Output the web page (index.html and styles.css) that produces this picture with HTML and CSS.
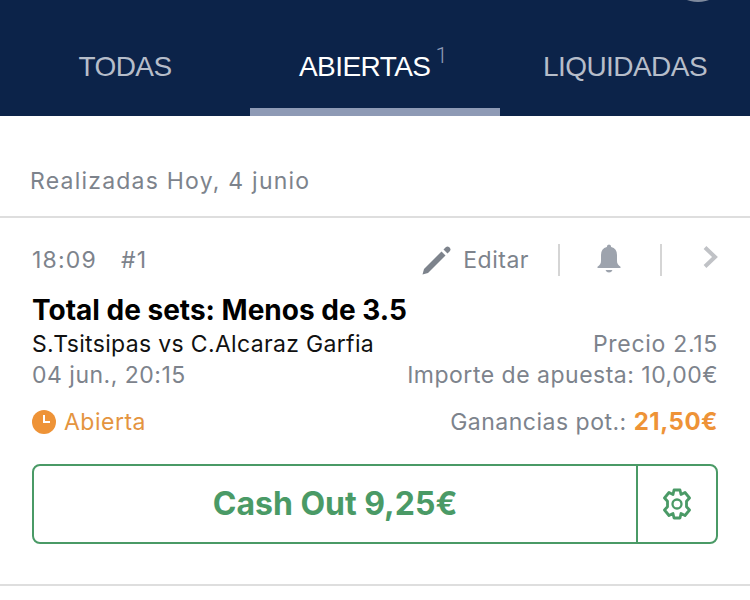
FILE: index.html
```html
<!DOCTYPE html>
<html lang="en">
<head>
    <meta charset="UTF-8">
    <meta name="viewport" content="width=device-width, initial-scale=1.0">
    <title>Apuestas</title>
    <link rel="stylesheet" href="styles.css">
</head>
<body>
    <header class="header">
        <div class="avatar"></div>
        <nav class="tabs">
            <div class="tab">TODAS</div>
            <div class="tab active">ABIERTAS<sup class="count">1</sup></div>
            <div class="tab">LIQUIDADAS</div>
        </nav>
    </header>
    <div class="date-row">Realizadas Hoy, 4 junio</div>
    <section class="bet">
        <div class="bet-top">
            <div class="time"><span>18:09</span><span>#1</span></div>
            <div class="actions">
                <svg class="pencil" width="30" height="30" viewBox="0 0 30 30">
                    <path d="M0.500 29.500 L2 24 L19.500 6.500 L23.500 10.500 L6 28 Z" fill="#7d838c"/>
                    <path d="M21.500 4.500 L24 2 Q25.500 0.800 27 2 L28 3 Q29.200 4.500 28 6 L25.500 8.500 Z" fill="#7d838c"/>
                </svg>
                <span class="edit">Editar</span>
                <i class="sep first"></i>
                <svg class="bell" width="26" height="30" viewBox="0 0 26 30">
                    <path d="M13 0.500 Q15.200 0.500 15.200 3 Q21 4.500 21 11 L21 17 Q21 20.500 24.500 22.800 L24.500 24 L1.500 24 L1.500 22.800 Q5 20.500 5 17 L5 11 Q5 4.500 10.800 3 Q10.800 0.500 13 0.500 Z" fill="#9da3ad"/>
                    <path d="M9.500 26 L16.500 26 Q15.500 28.500 13 28.500 Q10.500 28.500 9.500 26 Z" fill="#9da3ad"/>
                </svg>
                <i class="sep"></i>
                <svg class="chevron" width="16" height="24" viewBox="0 0 16 24">
                    <path d="M3 2.500 L13 12 L3 21.500" fill="none" stroke="#c0c2c6" stroke-width="4"/>
                </svg>
            </div>
        </div>
        <h2 class="market">Total de sets: Menos de 3.5</h2>
        <div class="line first-line">
            <span class="match">S.Tsitsipas vs C.Alcaraz Garfia</span>
            <span class="muted price">Precio 2.15</span>
        </div>
        <div class="line tight">
            <span class="muted">04 jun., 20:15</span>
            <span class="muted">Importe de apuesta: 10,00€</span>
        </div>
        <div class="line status-row">
            <span class="status">
                <svg width="24" height="24" viewBox="0 0 24 24">
                    <circle cx="12" cy="12" r="12" fill="#ee9337"/>
                    <path d="M12 5 L12 12 L18 12" fill="none" stroke="#fff" stroke-width="2"/>
                </svg>
                Abierta
            </span>
            <span class="muted">Ganancias pot.: <b class="win">21,50€</b></span>
        </div>
        <div class="cashout">
            <div class="cash-label">Cash Out 9,25€</div>
            <div class="cash-gear">
                <svg width="32" height="32" viewBox="0 0 32 32">
                    <path d="M13 2 L19 2 L20 6.500 L24 4.500 L28.500 10 L25.500 13.300 L25.500 18.700 L28.500 22 L24 27.500 L20 25.500 L19 30 L13 30 L12 25.500 L8 27.500 L3.500 22 L6.500 18.700 L6.500 13.300 L3.500 10 L8 4.500 L12 6.500 Z" fill="none" stroke="#4a9a66" stroke-width="2.800" stroke-linejoin="round"/>
                    <circle cx="16" cy="16" r="4.500" fill="none" stroke="#4a9a66" stroke-width="2.300"/>
                </svg>
            </div>
        </div>
    </section>
</body>
</html>
```

FILE: styles.css
```css
body {
    margin: 0;
    background-color: #fff;
    font-family: "Inter", "Liberation Sans", sans-serif;
    color: #000;
    overflow: hidden;
}

.header {
    position: relative;
    height: 116px;
    background-color: #0c2349;
}

.avatar {
    position: absolute;
    top: -22px;
    left: 678px;
    width: 40px;
    height: 24px;
    border-radius: 50%;
    background-color: #7f8a9e;
}

.tabs {
    display: flex;
    height: 100%;
}

.tab {
    flex: 1 1 0;
    display: flex;
    justify-content: center;
    padding-top: 51px;
    font-family: "Liberation Sans", sans-serif;
    font-size: 28px;
    line-height: 32px;
    letter-spacing: -0.55px;
    color: #b6bdc9;
    box-sizing: border-box;
}

.tab.active {
    color: #fff;
    border-bottom: 8px solid #8e9ab5;
}

.count {
    margin: -8px 4px 0 5px;
    font-family: "Roboto", sans-serif;
    font-size: 22px;
    font-weight: 300;
    line-height: 26px;
    color: #8e9ab5;
}

.date-row {
    height: 102px;
    padding: 50px 0 0 30px;
    box-sizing: border-box;
    border-bottom: 2px solid #dedede;
    font-size: 23px;
    line-height: 30px;
    letter-spacing: 1.22px;
    color: #7d838c;
}

.bet {
    padding: 26px 32px 0 32px;
    height: 368px;
    box-sizing: border-box;
    border-bottom: 2px solid #dedede;
}

.bet-top {
    display: flex;
    justify-content: space-between;
    align-items: center;
    height: 32px;
}

.time {
    display: flex;
    gap: 24px;
    font-size: 23px;
    letter-spacing: 1.2px;
    color: #7d838c;
}

.actions {
    display: flex;
    align-items: center;
}

.edit {
    margin-left: 11px;
    font-size: 23px;
    letter-spacing: 0.5px;
    color: #7d838c;
}

.sep {
    width: 2px;
    height: 32px;
    margin: 0 36px 0 0;
    background-color: #d5d5d5;
}

.sep.first {
    margin-left: 29px;
}

.bell {
    margin-right: 38px;
    margin-bottom: 3px;
}

.chevron {
    margin-left: 4px;
    margin-bottom: 7px;
}

.market {
    margin: 17px 0 0 0;
    font-size: 28px;
    line-height: 34px;
    font-weight: 700;
}

.line {
    display: flex;
    justify-content: space-between;
    margin-top: 2px;
    height: 30px;
    font-size: 23px;
    line-height: 30px;
    letter-spacing: 0.5px;
}

.line.tight {
    margin-top: 1px;
}

.match {
    color: #111;
    letter-spacing: 0.33px;
}

.muted {
    color: #7d838c;
}

.price {
    letter-spacing: 0.7px;
}

.status-row {
    margin-top: 17px;
}

.status {
    display: flex;
    align-items: center;
    gap: 8px;
    color: #e49440;
}

.win {
    color: #ee9337;
    font-size: 24px;
    font-weight: 700;
}

.cashout {
    display: flex;
    height: 80px;
    margin-top: 27px;
    border: 2px solid #4a9a66;
    border-radius: 8px;
    box-sizing: border-box;
}

.cash-label {
    flex: 1;
    display: flex;
    align-items: center;
    justify-content: center;
    padding-bottom: 2px;
    font-size: 32px;
    font-weight: 700;
    color: #4a9a66;
}

.cash-gear {
    width: 78px;
    display: flex;
    align-items: center;
    justify-content: center;
    padding-bottom: 1px;
    border-left: 2px solid #4a9a66;
}
```
